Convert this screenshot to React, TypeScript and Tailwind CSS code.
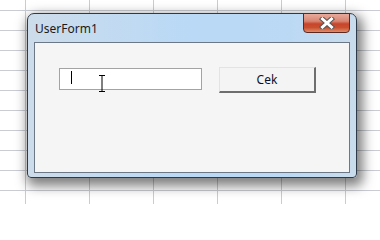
import React from "react";

export default function App() {
  return (
    <div
      className="relative w-[380px] h-[204px] overflow-hidden bg-white pl-[27px] pt-[13px] bg-[linear-gradient(to_right,#c9cdd3_1px,transparent_1px),linear-gradient(to_bottom,#c9cdd3_1px,transparent_1px)] bg-[size:64px_20px] bg-[position:25px_10px]"
      style={{ fontFamily: '"Noto Sans", "Liberation Sans", sans-serif' }}
    >
      {/* Window */}
      <div className="flex flex-col w-[330px] h-[165px] border border-[#2e3a47] rounded-t-[7px] rounded-b-[4px] bg-[linear-gradient(to_right,#cddcea_0%,#c4dbf0_20%,#b9d9f6_50%,#bcd9f4_80%,#c9dcec_100%)] shadow-[3px_5px_12px_3px_rgba(0,0,0,0.5)]">
        {/* Title bar */}
        <div className="flex items-start justify-between h-[28px] shrink-0">
          <div className="pl-[7px] pt-[8px] text-[12px] leading-[14px] text-[#1b1b1b]">UserForm1</div>
          <div className="-mt-px mr-[6px] w-[47px] h-[20px] rounded-b-[4px] border border-[#5a2a22] bg-[linear-gradient(to_bottom,#e7aa9c_0%,#d98572_40%,#c8442b_55%,#c9502f_75%,#e08c6c_100%)] flex items-center justify-center">
            <svg width="16" height="12" viewBox="0 0 16 12">
              <path
                d="M3.5 2 L12.5 10 M12.5 2 L3.5 10"
                stroke="#555555"
                strokeWidth="5"
                strokeLinecap="square"
              />
              <path
                d="M3.5 2 L12.5 10 M12.5 2 L3.5 10"
                stroke="#ffffff"
                strokeWidth="3"
                strokeLinecap="square"
              />
            </svg>
          </div>
        </div>
        {/* Client area */}
        <div className="flex-1 mx-[6px] mb-[4px] border border-[#6c7886] bg-[#f5f5f5] pl-[24px] pt-[24px]">
          <div className="flex items-start gap-[17px]">
            <div className="relative mt-px w-[143px] h-[22px] border border-[#a3a3a3] bg-white">
              <div className="absolute left-[11px] top-[2px] w-px h-[13px] bg-black" />
              <svg
                className="absolute left-[38px] top-[6px]"
                width="8"
                height="17"
                viewBox="0 0 8 17"
              >
                <path d="M1 0.5 H7 M4 0.5 V16.5 M1 16.5 H7" stroke="#000" strokeWidth="1" fill="none" />
              </svg>
            </div>
            <button className="w-[97px] h-[26px] bg-[#f4f4f4] border-t border-l border-t-[#e3e3e3] border-l-[#e3e3e3] border-r-2 border-b-2 border-r-[#6e6e6e] border-b-[#6e6e6e] text-[12px] text-[#10102a] flex items-center justify-center pt-[1px]">
              Cek
            </button>
          </div>
        </div>
      </div>
    </div>
  );
}
